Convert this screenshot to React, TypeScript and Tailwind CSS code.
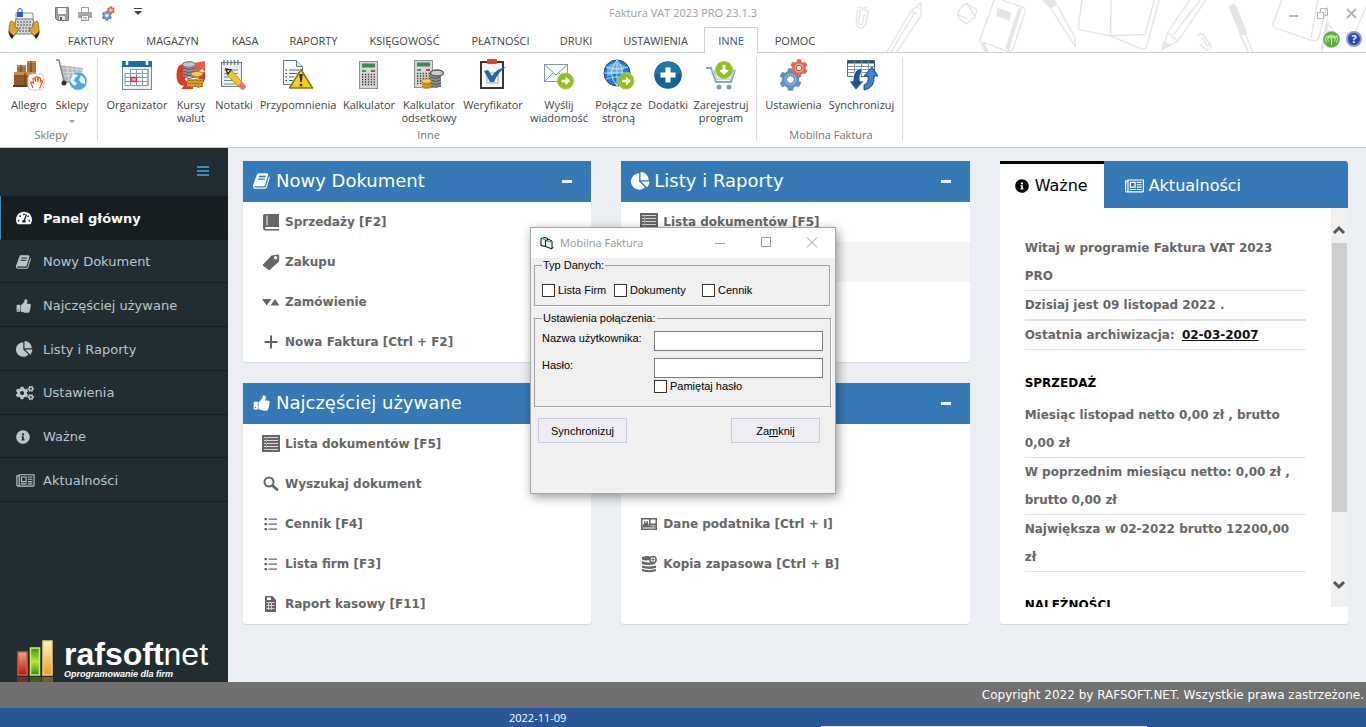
import type { ReactNode } from "react";
import { FaCog, FaCogs, FaInfoCircle, FaTachometerAlt } from "react-icons/fa";

/* ---------- small glyphs ---------- */

function BookIcon({ className }: { className?: string }) {
  return (
    <svg className={className} viewBox="0 0 1792 1792" fill="currentColor" aria-hidden="true">
      <path d="M1639 478q40 57 18 129l-275 906q-19 64-76.5 107.5t-122.5 43.5h-923q-77 0-148.5-53.5t-99.5-131.5q-24-67-2-127 0-4 3-27t4-37q1-8-3-21.5t-3-19.5q2-11 8-21t16.5-23.5 16.5-23.5q23-38 45-91.5t30-91.5q3-10 .5-30t-.5-28q3-11 17-28t17-23q21-36 42-92t25-90q1-9-2.5-32t.5-28q4-13 22-30.5t22-22.5q19-26 42.5-84.5t27.5-96.5q1-8-3-25.5t-2-26.5q2-8 9-18t18-23 17-21q8-12 16.5-30.5t15-35 16-36 19.5-32 26.5-23.5 36-11.5 47.5 5.5l-1 3q38-9 51-9h761q74 0 114 56t18 130l-274 906q-36 119-71.5 153.5t-128.5 34.5h-869q-27 0-38 15-11 16-1 43 24 70 144 70h923q29 0 56-15.5t35-41.5l300-987q7-22 5-57 38 15 59 43zm-1064 2q-4 13 2 22.5t20 9.5h608q13 0 25.5-9.5t16.5-22.5l21-64q4-13-2-22.5t-20-9.5h-608q-13 0-25.5 9.5t-16.5 22.5zm-83 256q-4 13 2 22.5t20 9.5h608q13 0 25.5-9.5t16.5-22.5l21-64q4-13-2-22.5t-20-9.5h-608q-13 0-25.5 9.5t-16.5 22.5z" />
    </svg>
  );
}

function ThumbIcon({ className }: { className?: string }) {
  return (
    <svg className={className} viewBox="0 0 1792 1792" fill="currentColor" aria-hidden="true">
      <path d="M320 1344q0-26-19-45t-45-19q-27 0-45.5 19t-18.500 45q0 27 18.500 45.500t45.500 18.500q26 0 45-18.500t19-45.500zm160-512v640q0 26-19 45t-45 19h-288q-26 0-45-19t-19-45v-640q0-26 19-45t45-19h288q26 0 45 19t19 45zm1184 0q0 86-55 149 15 44 15 76 3 76-43 137 17 56 0 117-15 57-54 94 9 112-49 181-64 76-197 78h-129q-66 0-144-15.500t-121.500-29-120.500-39.500q-123-43-158-44-26-1-45-19.500t-19-44.500v-641q0-25 18-43.500t43-20.500q24-2 76-59t101-121q68-87 101-120 18-18 31-48t17.500-48.500 13.500-60.500q7-39 12.500-61t19.500-52 34-50q19-19 45-19 46 0 82.500 10.500t60 26 40 40.500 24 45 12 50 5 45 .5 39q0 38-9.500 76t-19 60-27.500 56q-3 6-10 18t-11 22-8 24h277q78 0 135 57t57 135z" />
    </svg>
  );
}

function PieIcon({ className }: { className?: string }) {
  return (
    <svg className={className} viewBox="0 0 1792 1792" fill="currentColor" aria-hidden="true">
      <path d="M768 890l546 546q-106 108-247.5 168t-298.5 60q-209 0-385.5-103t-279.5-279.5-103-385.5 103-385.5 279.5-279.5 385.5-103v762zm187 6h773q0 157-60 298.5t-168 247.5zm709-128h-768v-768q209 0 385.5 103t279.5 279.5 103 385.5z" />
    </svg>
  );
}

function NewsIcon({ className }: { className?: string }) {
  return (
    <svg className={className} viewBox="0 0 2048 1792" fill="currentColor" aria-hidden="true">
      <path d="M1024 512h-384v384h384v-384zm128 640v128h-640v-128h640zm0-768v640h-640v-640h640zm640 768v128h-512v-128h512zm0-256v128h-512v-128h512zm0-256v128h-512v-128h512zm0-256v128h-512v-128h512zm-1536 960v-960h-128v960q0 26 19 45t45 19 45-19 19-45zm1664 0v-1088h-1536v1088q0 33-11 64h1483q26 0 45-19t19-45zm128-1216v1216q0 80-56 136t-136 56h-1664q-80 0-136-56t-56-136v-1088h256v-128h1792z" />
    </svg>
  );
}

function Glyph({ children }: { children: ReactNode }) {
  return (
    <svg className="h-[18px] w-[18px] shrink-0" viewBox="0 0 18 18" fill="currentColor" aria-hidden="true">
      {children}
    </svg>
  );
}

const glyphs = {
  ledger: (
    <Glyph>
      <path d="M3 1h14v13H4.500q-1.500 0-1.500 1t1.500 1H17v1.500H3.500Q1 17.500 1 15V3q0-2 2-2z" />
      <path d="M5 2.500v10" stroke="#fff" />
    </Glyph>
  ),
  tag: (
    <Glyph>
      <path fillRule="evenodd" d="M1 11.500 9.500 2.500 16 1.500q1.200 0 1.200 1.200L17 8.500 8 16.800q-.8.600-1.500 0L1 12.800q-.6-.600 0-1.300zM13.500 3a1.700 1.700 0 1 0 .1 3.400 1.700 1.700 0 0 0-.1-3.400z" />
    </Glyph>
  ),
  order: (
    <Glyph>
      <path d="M0 6h9.500L4.700 12.500zM8.500 12.500h9L13 6z" />
    </Glyph>
  ),
  plus: (
    <Glyph>
      <path d="M8 2.500h2V8h5.500v2H10v5.500H8V10H2.500V8H8z" />
    </Glyph>
  ),
  table: (
    <Glyph>
      <path d="M0 0h18v17H0z" />
      <path d="M2 2.500h14M2 5.500h14M2 8.500h14M2 11.500h14M2 14.500h14" stroke="#d8d8d8" />
      <path d="M4.500 2v13" stroke="#999" />
    </Glyph>
  ),
  search: (
    <Glyph>
      <circle cx="7" cy="7" r="4.500" fill="none" stroke="currentColor" strokeWidth="2" />
      <path d="m10.500 10.500 4.500 4" stroke="currentColor" strokeWidth="3" strokeLinecap="round" />
    </Glyph>
  ),
  list: (
    <Glyph>
      <path d="M2.500 3h2.500v2.300H2.500zM2.500 8h2.500v2.300H2.500zM2.500 13h2.500v2.300H2.500zM6.500 3.500H15v1.300H6.500zM6.500 8.500H15v1.300H6.500zM6.500 13.500H15v1.300H6.500z" />
    </Glyph>
  ),
  report: (
    <Glyph>
      <path fillRule="evenodd" d="M3 1h7.500l3.500 4v12H3zM5 2.500v2.500h4V2.500z" />
      <path d="M4.500 7.500h8M4.500 10.500h8M4.500 13.500h8M6.500 7v8M9.500 7v8" stroke="#d0d0d0" />
    </Glyph>
  ),
  card: (
    <Glyph>
      <path fillRule="evenodd" d="M1 3h16v12H1zm1.500 1.500V11H9V4.500zm8 0v4h5v-4zm0 6v.8h5v-.8zm-8 2v1h13v-1z" />
      <path d="M4.300 6h1.200v1.800h1.200V6H8v1.800l.8 2.400V11H3v-1l1.300-2z" />
    </Glyph>
  ),
  backup: (
    <Glyph>
      <path d="M2 2q7-2 8 0v3Q5 6 2 4.500zM2 6q4 2 9 1.200 2 1.600 4.500.8V9Q8 11 2 9zM2 10.500q6.500 2 14 0v2.200Q9 15 2 12.800zM2 14q6.500 2.300 14 0v2Q9 18.500 2 16z" />
      <circle cx="13" cy="4.500" r="3.100" fill="#fff" stroke="currentColor" strokeWidth="1.500" />
      <path d="M13 3v3M11.500 4.500h3" stroke="currentColor" />
    </Glyph>
  ),
};

/* ---------- ribbon artwork ---------- */

function Art({ children }: { children: ReactNode }) {
  return (
    <svg className="h-8 w-8 shrink-0" viewBox="0 0 32 32" fill="none" aria-hidden="true">
      {children}
    </svg>
  );
}

function GoBadge({ cx, cy }: { cx: number; cy: number }) {
  return (
    <g>
      <circle cx={cx} cy={cy} r="8" fill="#8fbf21" stroke="#a9ce4b" />
      <path d={`M${cx - 4} ${cy - 1.2}h4v-3l5 4.200-5 4.200v-3h-4z`} fill="#fff" />
    </g>
  );
}

function GearPair() {
  return (
    <>
      <FaCog x="1" y="9" size={23} color="#5f8fc6" />
      <circle cx="12.500" cy="20.500" r="6" fill="#8db4de" />
      <circle cx="12.500" cy="20.500" r="4" fill="#fff" stroke="#3f6dab" />
      <FaCog x="12" y="0" size={18} color="#e0664f" />
      <circle cx="21" cy="9" r="4.500" fill="#f3a28f" />
      <circle cx="21" cy="9" r="2.700" fill="#fff" stroke="#c5452f" />
    </>
  );
}

function CalculatorBody() {
  return (
    <>
      <rect x="6.500" y="2.500" width="18" height="27" fill="#d6d8d8" stroke="#8b9092" />
      <rect x="9" y="4.500" width="13" height="4" fill="#3f8557" />
      <rect x="9" y="11" width="4" height="2" fill="#38a052" />
      <rect x="18" y="11" width="4" height="2" fill="#c5403c" />
      <path d="M9 15.500h13M9 18h13M9 20.500h13M9 23h13M9 25.500h13" stroke="#34383b" strokeWidth="1.300" strokeDasharray="1.300 1.600" />
    </>
  );
}

const art = {
  allegro: (
    <Art>
      <path d="M4 6h9v8H4zM14 2h9v12h-9z" fill="#a9713c" />
      <path d="M1 13h22v13H1z" fill="#925a2b" />
      <path d="M1 13h22v3H1zM4 6h9v2H4zM14 2h9v2h-9z" fill="#c48e55" />
      <path d="M12 14v12M8 6v7M18 2v11" stroke="#6d3f1a" />
      <rect x="0" y="26" width="18" height="2" fill="#5e3d24" />
      <rect x="15" y="15" width="16" height="16" rx="4" fill="#fff" stroke="#cfcfcf" />
      <path d="M20 29q-1-3-2.500-5.500 1.500-1 3 1l-.5-5q1.500-1 2 0l.7 3V18q1.500-.8 2 0l.2 4.500.8-4q1.500-.3 1.700.8l-.2 4 1-2q1.500 0 1.200 1.200L28 26l-1.500 3.500" stroke="#ee5a1c" strokeWidth="1.200" strokeLinejoin="round" />
    </Art>
  ),
  shops: (
    <Art>
      <path d="M4 6 27 9l-3 12-16 1z" fill="#b4b9bc" />
      <path d="m6 9 20 2M7 13l18 1M8 17l17 0M11 7l2 15M16 8l1 14M21 8v14" stroke="#e2e4e6" strokeWidth=".8" />
      <path d="M0 1h3l5 22h6" stroke="#83898d" strokeWidth="1.500" />
      <circle cx="8" cy="24" r="2.500" fill="#2c2f31" />
      <circle cx="22" cy="22" r="9" fill="#4ca4dc" stroke="#a9d5f1" />
      <path d="M17 15q4 0 5 2l-3 2-1 3 3 2-2 3q-4-2-5-6zM25 16l4 4v5l-4-1-2-3z" fill="#e8f5fc" />
    </Art>
  ),
  organizer: (
    <Art>
      <rect x="1.500" y="2.500" width="29" height="28" fill="#eef2f4" stroke="#6d8a9b" />
      <rect x="1" y="2" width="30" height="6" fill="#1a6fa3" />
      <path d="M6 2v4M26 2v4" stroke="#fff" strokeWidth="2.500" />
      <path d="M4 11h24v15H4z" fill="#fff" />
      <path d="M9 10.500h18v16H4v-12h23M4 18.500h23M4 22.500h23M9.500 11v15M15.500 11v15M21.500 11v15M27 10v17" stroke="#7f9aab" />
      <rect x="10" y="18.500" width="5.500" height="4" fill="#f3a5b0" stroke="#c5304b" strokeWidth="1.300" />
    </Art>
  ),
  rates: (
    <Art>
      <path d="M13 3Q2 4 1.500 15T9 27l-3 3h12v-9l-3 3q-6-2-6-9 0-6 6-7z" fill="#dd3b25" />
      <path d="M19 4l11-2v11l-3-3q-2 3-7 3z" fill="#ee5b42" />
      <path d="M30 13q2 10-7 16l-3-4q5-4 4-11z" fill="#d73622" />
      <path d="M8 6h12v12H8z" fill="#8f9395" />
      <ellipse cx="14" cy="5.500" rx="6.500" ry="2.800" fill="#c3c6c8" stroke="#6d7173" />
      <path d="M8 9q6 3 12 0M8 12q6 3 12 0M8 15q6 3 12 0M8 18q6 3 12 0" stroke="#56595b" />
      <path d="M12 20h16v8H12z" fill="#dfa021" />
      <ellipse cx="22" cy="15" rx="6" ry="2.500" fill="#f8cf4d" stroke="#b67c12" />
      <path d="M17 18q5 2 10 0M12 21q5 2 8 0 5 2 8 0M12 24q5 2 8 0 5 2 8 0M12 27q5 2 8 0 5 2 8 0" stroke="#a97008" />
    </Art>
  ),
  notes: (
    <Art>
      <rect x="3.500" y="3.500" width="20" height="24" fill="#edf1f3" stroke="#617d8c" />
      <path d="M6 1v5M9.500 1v5M13 1v5M16.500 1v5M20 1v5" stroke="#71777a" strokeWidth="1.300" />
      <path d="M6 11h14M6 14.500h14M6 18h14M6 21.500h10M6 25h14" stroke="#5e8da9" />
      <path d="m8 10 6 2 10 11-4 4L9 16z" fill="#f4c61d" stroke="#ba870b" strokeWidth=".8" />
      <path d="m8 10 5 1-3 4z" fill="#fff" stroke="#222" strokeWidth="1.300" />
      <path d="m20 27 4-4 4 4q-.5 3-4 4z" fill="#ea6f7b" />
    </Art>
  ),
  reminders: (
    <Art>
      <path d="M1.500 1.500h13l6 6v18h-19z" fill="#fff" stroke="#607c8a" />
      <path d="M14.500 1.500v6h6" stroke="#607c8a" fill="#dfe7eb" />
      <path d="M7 11h10M7 14.500h8M7 18h5M7 21.500h4" stroke="#356f92" />
      <path d="M3.500 11h1.500M3.500 14.500h1.500M3.500 18h1.500M3.500 21.500h1.500" stroke="#222" />
      <path d="M19 10.500 30.500 29h-23z" fill="#f9cf12" stroke="#8c7614" strokeWidth="1.500" strokeLinejoin="round" />
      <path d="M17.200 15h3.600l-1 8h-1.600z" fill="#2e2a12" />
      <circle cx="19" cy="26" r="1.500" fill="#2e2a12" />
    </Art>
  ),
  calculator: (
    <Art>
      <CalculatorBody />
    </Art>
  ),
  interest: (
    <Art>
      <g transform="translate(-5 -1)">
        <CalculatorBody />
      </g>
      <path d="M17 15h11v13H17z" fill="#8b8f91" />
      <ellipse cx="24" cy="14" rx="6.500" ry="3" fill="#c8cbcd" stroke="#585c5e" strokeWidth="1.500" />
      <path d="M17 18q6 3 11 0M17 21q6 3 11 0M17 24q6 3 11 0M17 27q6 3 11 0" stroke="#4f5355" />
      <path d="M9 22h9v7q-5 2-9 0z" fill="#e0a124" />
      <ellipse cx="13.500" cy="22" rx="4.800" ry="2.200" fill="#fbd35a" stroke="#b77f12" />
      <path d="M9 25q5 2 9 0M9 27.500q5 2 9 0" stroke="#b0770d" />
    </Art>
  ),
  verifier: (
    <Art>
      <rect x="4" y="3" width="22" height="26" fill="#f4f6f7" stroke="#40362f" strokeWidth="2" />
      <rect x="10" y="0" width="10" height="5" rx="1" fill="#dc4631" />
      <rect x="10" y="14" width="11" height="10" stroke="#96a6ae" />
      <path d="M7 12l4-1 4 6q4-7 14-9-8 5-12 15h-4z" fill="#1a6b9e" />
    </Art>
  ),
  message: (
    <Art>
      <rect x="1.500" y="5.500" width="23" height="17" fill="#fafbfb" stroke="#8897a0" />
      <path d="m2 6 11 10L24 6M2 22l8-8M24 22l-8-8" stroke="#8897a0" />
      <GoBadge cx={22.5} cy={22} />
    </Art>
  ),
  web: (
    <Art>
      <circle cx="14" cy="14" r="13" fill="#1f7bc9" stroke="#174d86" />
      <path d="M4 8q8-8 18-1l-3 7-9 1-6 3z" fill="#9ed2f7" opacity=".6" />
      <path d="M1 14h26M3 8q11 4 22 0M3 20q11-4 22 0M14 1v26M14 1Q3 14 14 27M14 1q11 13 0 26" stroke="#cfe9fb" strokeWidth=".9" />
      <GoBadge cx={23} cy={22} />
    </Art>
  ),
  addons: (
    <Art>
      <circle cx="16" cy="16" r="13.800" fill="#11649a" />
      <path d="M3 14q2-10 13-11 11 1 13 11-13 5-26 0z" fill="#2f83b5" opacity=".6" />
      <path d="M13.500 8.500h5v5h5v5h-5v5h-5v-5h-5v-5h5z" fill="#fff" />
    </Art>
  ),
  register: (
    <Art>
      <path d="M1 9h5l5 14h15l4-12" stroke="#86a9bd" strokeWidth="2" />
      <path d="M6 12h3l3 8h14l3-9h1" stroke="#b9cdd8" strokeWidth="1.300" />
      <circle cx="14" cy="28" r="2.500" fill="#7fa3b8" />
      <circle cx="24" cy="28" r="2.500" fill="#7fa3b8" />
      <circle cx="19" cy="11" r="8.500" fill="#8fbf21" stroke="#a9ce4b" />
      <path d="M17.500 6h3v5h3.500l-5 5-5-5h3.500z" fill="#fff" />
    </Art>
  ),
  settings: (
    <Art>
      <GearPair />
    </Art>
  ),
  sync: (
    <Art>
      <path d="M1.500 1.500h27v16h-27z" fill="#fff" stroke="#55707e" />
      <path d="M1.500 3h27" stroke="#2e5566" strokeWidth="3" />
      <path d="M2 7.500h26M2 10.500h26M2 13.500h26M8.500 2v15M15.500 2v15M22.500 2v15" stroke="#7e949f" />
      <path d="M16 9q-9 1-9 13H3l7 9 8-9h-4q-1-6 2-9z" fill="#1f5296" stroke="#fff" strokeWidth=".8" />
      <path d="M18 31q11-2 10-14h4l-6-9-8 9h4q1 7-4 9z" fill="#3f83cc" stroke="#12396f" strokeWidth=".8" />
    </Art>
  ),
};

type RibbonItem = { label: string[]; icon: ReactNode; width: string; menu?: boolean };

const ribbonGroups: { name: string; className: string; items: RibbonItem[] }[] = [
  {
    name: "Sklepy",
    className: "pl-[7px] pr-1",
    items: [
      { label: ["Allegro"], icon: art.allegro, width: "w-[44px]" },
      { label: ["Sklepy"], icon: art.shops, width: "w-[42px]", menu: true },
    ],
  },
  {
    name: "Inne",
    className: "pl-[6px] pr-[5px]",
    items: [
      { label: ["Organizator"], icon: art.organizer, width: "w-[66px]" },
      { label: ["Kursy", "walut"], icon: art.rates, width: "w-[42px]" },
      { label: ["Notatki"], icon: art.notes, width: "w-[44px]" },
      { label: ["Przypomnienia"], icon: art.reminders, width: "w-[84px]" },
      { label: ["Kalkulator"], icon: art.calculator, width: "w-[58px]" },
      { label: ["Kalkulator", "odsetkowy"], icon: art.interest, width: "w-[62px]" },
      { label: ["Weryfikator"], icon: art.verifier, width: "w-[66px]" },
      { label: ["Wyślij", "wiadomość"], icon: art.message, width: "w-[66px]" },
      { label: ["Połącz ze", "stroną"], icon: art.web, width: "w-[53px]" },
      { label: ["Dodatki"], icon: art.addons, width: "w-[46px]" },
      { label: ["Zarejestruj", "program"], icon: art.register, width: "w-[60px]" },
    ],
  },
  {
    name: "Mobilna Faktura",
    className: "pl-[5px] pr-1",
    items: [
      { label: ["Ustawienia"], icon: art.settings, width: "w-[63px]" },
      { label: ["Synchronizuj"], icon: art.sync, width: "w-[73px]" },
    ],
  },
];

const tabs = [
  { label: "FAKTURY", width: "w-[76px]" },
  { label: "MAGAZYN", width: "w-[87px]" },
  { label: "KASA", width: "w-[58px]" },
  { label: "RAPORTY", width: "w-[79px]" },
  { label: "KSIĘGOWOŚĆ", width: "w-[103px]" },
  { label: "PŁATNOŚCI", width: "w-[89px]" },
  { label: "DRUKI", width: "w-[62px]" },
  { label: "USTAWIENIA", width: "w-[97px]" },
  { label: "INNE", width: "w-[54px]", active: true },
  { label: "POMOC", width: "w-[74px]" },
];

/* ---------- header ---------- */

function Doodles() {
  return (
    <svg className="absolute right-0 top-0 h-[52px] w-[546px]" viewBox="0 0 1568 157" preserveAspectRatio="none" fill="none" stroke="#e6e6e6" strokeWidth="4" aria-hidden="true">
      <path d="M108 20q12 8 28 0M108 30l-4 40q2 18 18 14l8-8 8-40q-8-14-22-4l-6 36q4 10 12 2l6-28" />
      <path d="m192 157 70-124 28-24v38l-70 110M262 33l18 10M204 157l68-120M276 22l14-14v18z" />
      <path d="m420 10 30 18q2 24-30 44l-24-20q-4-20 24-42zM420 10q14 14 26 46M398 46l26 10" />
      <path d="m500 0-42 124 84 32q10-2 14-14l34-110q0-6-8-10l-60-22M578 24l-38 130M470 130l14 27" />
      <path d="m574 26-38 122M464 130l14 26" strokeWidth="9" />
      <path d="m510 26 38 14-6 20-34-14z" fill="#e6e6e6" />
      <path d="m644 0 18 24 72 118-2-28-52-100M662 24l16-10" />
      <path d="m640 0 20 22 18-10-6-12z" fill="#e6e6e6" />
      <path d="m752 0-10 82q0 8 12 10l80 16 90 40q10 2 14-8L974 0M836 0l-2 108 100-4L960 0" />
      <path d="M1062 0 998 98l-14 50 44-24 80-124M998 98l30 26M1014 106l78-106" />
      <path d="m986 126-2 22 22-12z" fill="#e6e6e6" />
      <path d="M1084 110q4-14 16-4l22 30q4 16-10 16l-22-18M1096 112l16 26 8-4-14-22" />
      <path d="m1186 24 28 72" strokeWidth="22" strokeLinecap="round" />
      <path d="m1204 100 26 57M1220 94l22 63" />
      <path d="m1326 0-26 74 6 10 106 38q14 4 20-6l24-100M1430 0l-20 114M1452 60l28 40" />
      <path d="m1568 20-40 100M1460 90l-20 67" />
      <path d="m1456 70-14 80" strokeWidth="9" />
    </svg>
  );
}

function AppHeader() {
  return (
    <header className="relative flex bg-white font-['Open_Sans','Noto_Sans',sans-serif] text-[#444]">
      <Doodles />
      <div className="absolute inset-x-0 bottom-0 border-b border-[#d2d2d2]" />
      <div className="flex w-[53px] shrink-0 justify-center pr-[5px] pt-[7px]">
        <svg className="h-8 w-8" viewBox="0 0 32 32" fill="none" aria-hidden="true">
          <path d="M8 6h17v20H8z" fill="#f3f4f6" stroke="#8d9197" />
          <path d="M8 12h17l3 15H5z" fill="#d4d6da" stroke="#74787e" />
          <path d="M9 15h15M9 18h16M8 21h17M8 24h18" stroke="#474b52" strokeDasharray="2 1" />
          <rect x="9" y="5" width="6" height="5" fill="#2b56d6" />
          <path d="M10 5V2.500q2-2.500 4 0V5" stroke="#2b56d6" />
          <path d="M1 25q0-9 2-11l4 2v4l4 2-5 7zM31 25q0-9-2-11l-4 2v4l-4 2 5 7z" fill="#e3a62c" stroke="#8f6313" strokeWidth=".8" />
          <path d="m0 24 6 5-2 3q-3-3-4-8zM32 24l-6 5 2 3q3-3 4-8z" fill="#23262b" />
        </svg>
      </div>
      <div className="relative flex min-w-0 flex-1 flex-col">
        <div className="flex h-[27px] items-center">
          <div className="flex flex-1 items-center gap-[9px] pl-[2px]">
            <button type="button" aria-label="Zapisz">
              <svg className="h-[14px] w-[14px]" viewBox="0 0 14 14" fill="none" aria-hidden="true">
                <path d="M.5.500h13v13h-11l-2-2z" fill="#9a9da0" stroke="#777a7d" />
                <path d="M3 1h8v6H3z" fill="#fff" />
                <path d="M4 9h6v4H4z" fill="#dfe2e4" />
                <path d="M5 10h2v3H5z" fill="#555" />
              </svg>
            </button>
            <button type="button" aria-label="Drukuj">
              <svg className="h-[14px] w-[14px]" viewBox="0 0 14 14" fill="none" aria-hidden="true">
                <path d="M3.500.5h7v5h-7z" fill="#fff" stroke="#999" />
                <path d="M0 5h14v6H0z" fill="#a6aaad" />
                <path d="M3.500 8.500h7v5h-7z" fill="#fff" stroke="#999" />
                <path d="M5 10.500h4M5 12h4" stroke="#bbb" />
              </svg>
            </button>
            <button type="button" aria-label="Opcje">
              <svg className="h-[15px] w-[15px]" viewBox="0 0 32 32" fill="none" aria-hidden="true">
                <GearPair />
              </svg>
            </button>
            <button type="button" aria-label="Dostosuj" className="mb-[6px] ml-[8px]">
              <svg className="h-[10px] w-[10px]" viewBox="0 0 10 10" aria-hidden="true">
                <path d="M1 2h8v1H1zM1 5h8L5 9z" fill="#444" />
              </svg>
            </button>
          </div>
          <p className="pr-[46px] text-[11px] text-[#a0a0a0]">Faktura VAT 2023 PRO 23.1.3</p>
          <div className="flex flex-1 items-center justify-end gap-[18px] pr-[9px] text-[#b8b8b8]">
            <button type="button" aria-label="Minimalizuj">
              <svg className="h-[11px] w-[11px]" viewBox="0 0 11 11" aria-hidden="true">
                <path d="M1 7h9v2H1z" fill="currentColor" />
              </svg>
            </button>
            <button type="button" aria-label="Przywróć">
              <svg className="h-[11px] w-[11px]" viewBox="0 0 11 11" fill="none" stroke="currentColor" aria-hidden="true">
                <path d="M.5 4.500h6v6h-6zM3.500 4V.5h7v7H7" />
              </svg>
            </button>
            <button type="button" aria-label="Zamknij program">
              <svg className="h-[11px] w-[11px]" viewBox="0 0 11 11" fill="none" stroke="currentColor" strokeWidth="2" aria-hidden="true">
                <path d="m1 1 9 9M10 1l-9 9" />
              </svg>
            </button>
          </div>
        </div>
        <nav className="flex h-[26px]">
          {tabs.map((tab) => (
            <button
              key={tab.label}
              type="button"
              className={`${tab.width} shrink-0 whitespace-nowrap pt-[2px] text-center text-[11px] ${
                tab.active ? "border border-b-0 border-[#d2d2d2] bg-white text-[#2b579a]" : ""
              }`}
            >
              {tab.label}
            </button>
          ))}
          <div className="flex flex-1 items-center justify-end gap-[6px] pb-[2px] pr-[4px]">
            <button type="button" aria-label="Pomoc zdalna">
              <svg className="h-[17px] w-[17px]" viewBox="0 0 17 17" fill="none" aria-hidden="true">
                <circle cx="8.500" cy="8.500" r="7.800" fill="#4fb52e" stroke="#7d9b72" />
                <path d="M3 6q5-5 11 0-5 3-11 0z" fill="#a9e38c" />
                <path d="M8.500 7v7M5.500 5.500q-1.500 2.500 0 5M11.500 5.500q1.500 2.500 0 5M3.500 4.500q-2 4 0 7M13.500 4.500q2 4 0 7" stroke="#eefbe8" strokeWidth=".8" />
              </svg>
            </button>
            <button type="button" aria-label="Pomoc" className="h-4 w-4 rounded-full border-2 border-[#8e9cc4] bg-[#2148c0] text-[11px] font-bold leading-[12px] text-white">
              ?
            </button>
          </div>
        </nav>
      </div>
    </header>
  );
}

function Ribbon() {
  return (
    <div className="flex border-b border-[#d2d2d2] bg-white font-['Open_Sans','Noto_Sans',sans-serif] text-[11px] text-[#444]">
      {ribbonGroups.map((group) => (
        <section key={group.name} className="pb-[6px] pt-[5px]">
          <div className={`flex h-[83px] flex-col justify-between border-r border-[#dcdcdc] ${group.className}`}>
            <div className="flex">
              {group.items.map((item) => (
                <button key={item.label.join(" ")} type="button" className={`flex shrink-0 flex-col items-center pt-px ${item.width}`}>
                  {item.icon}
                  <span className="mt-[7px] whitespace-nowrap leading-[13px]">
                    {item.label.map((line) => (
                      <span key={line} className="block">
                        {line}
                      </span>
                    ))}
                  </span>
                  {item.menu && <span className="mt-[9px] border-x-[3px] border-t-[3px] border-x-transparent border-t-[#999]" />}
                </button>
              ))}
            </div>
            <p className="pl-[2px] text-center leading-[12px] text-[#777]">{group.name}</p>
          </div>
        </section>
      ))}
    </div>
  );
}

/* ---------- sidebar ---------- */

const sidebarItems = [
  { label: "Panel główny", icon: <FaTachometerAlt className="h-4 w-4" />, active: true },
  { label: "Nowy Dokument", icon: <BookIcon className="h-4 w-4" /> },
  { label: "Najczęściej używane", icon: <ThumbIcon className="h-4 w-4" /> },
  { label: "Listy i Raporty", icon: <PieIcon className="h-[17px] w-[17px]" /> },
  { label: "Ustawienia", icon: <FaCogs className="h-[18px] w-[18px]" /> },
  { label: "Ważne", icon: <FaInfoCircle className="h-[14px] w-[14px]" /> },
  { label: "Aktualności", icon: <NewsIcon className="h-4 w-[19px]" /> },
];

function Logo() {
  return (
    <div className="flex h-[43px] items-start gap-[11px] pl-[17px] text-white">
      <svg className="h-[43px] w-9 shrink-0" viewBox="0 0 36 43" aria-hidden="true">
        <defs>
          <linearGradient id="barRed" x2="0" y2="1">
            <stop stopColor="#e9a796" />
            <stop offset="1" stopColor="#b8121b" />
          </linearGradient>
          <linearGradient id="barGreen" x2="0" y2="1">
            <stop stopColor="#349a0a" />
            <stop offset=".5" stopColor="#b9e838" />
            <stop offset="1" stopColor="#2f8d10" />
          </linearGradient>
          <linearGradient id="barAmber" x2="0" y2="1">
            <stop stopColor="#fff4c8" />
            <stop offset="1" stopColor="#f39a1b" />
          </linearGradient>
        </defs>
        <rect x="1" y="13" width="9" height="23" fill="url(#barRed)" stroke="#e4572b" strokeWidth="1.500" />
        <rect x="13.500" y="9" width="9" height="27" fill="url(#barGreen)" stroke="#c2f06a" strokeWidth="1.500" />
        <rect x="26" y="2" width="9" height="34" fill="url(#barAmber)" stroke="#f7cf76" strokeWidth="1.500" />
        <path d="M0 38h11v5H0z" fill="#6d3427" />
        <path d="M13 38h11v5H13z" fill="#3f5d26" />
        <path d="M25 38h11v5H25z" fill="#7b5a2c" />
      </svg>
      <div className="font-['Liberation_Sans',Arial,sans-serif]">
        <p className="text-[32px] leading-[30px]">
          <b>rafsoft</b>net
        </p>
        <p className="text-[9px] font-bold italic leading-[10px]">Oprogramowanie dla firm</p>
      </div>
    </div>
  );
}

function Sidebar() {
  return (
    <aside className="flex w-[228px] shrink-0 flex-col justify-between bg-[#222d32] text-[13px] text-[#b8c7ce]">
      <div>
        <div className="flex h-12 items-center justify-end pr-[19px]">
          <button type="button" aria-label="Menu" className="text-[#3c8dbc]">
            <svg className="h-[14px] w-3" viewBox="0 0 12 14" fill="currentColor" aria-hidden="true">
              <path d="M0 1h12v2H0zM0 5h12v2H0zM0 9h12v2H0z" />
            </svg>
          </button>
        </div>
        <nav className="grid h-[306px] grid-rows-7">
          {sidebarItems.map((item) => (
            <a
              key={item.label}
              href="#"
              className={`flex items-center border-b border-[#161d20] pl-[15px] pt-[2px] ${
                item.active ? "border-l border-l-[#3c8dbc] bg-[#171e21] font-bold text-white" : "border-l border-l-transparent"
              }`}
            >
              <span className="w-[27px]">{item.icon}</span>
              {item.label}
            </a>
          ))}
        </nav>
      </div>
      <Logo />
    </aside>
  );
}

/* ---------- dashboard ---------- */

type PanelRow = { label: string; icon: ReactNode } | null;

function Panel({ title, icon, rows, striped }: { title?: string; icon?: ReactNode; rows: PanelRow[]; striped?: number }) {
  return (
    <section className="rounded-b-[3px] bg-white shadow-[0_1px_1px_rgba(0,0,0,0.1)]">
      <div className="flex h-[41px] items-center bg-[#357ab7] pb-px pl-[10px] pr-[19px] text-white">
        <span className="w-[23px]">{icon}</span>
        <h2 className="flex-1 text-[18px] leading-[24px]">{title}</h2>
        <button type="button" aria-label="Zwiń" className="flex h-4 w-[10px] items-center">
          <span className="h-[3px] w-full bg-white/90" />
        </button>
      </div>
      <ul>
        {rows.map((row, i) => (
          <li key={i} className={`h-10 ${striped === i ? "bg-[#f4f4f4]" : ""}`}>
            {row && (
              <a href="#" className="flex h-full items-center gap-[5px] pl-[19px] text-[12px] font-bold text-[#666]">
                {row.icon}
                {row.label}
              </a>
            )}
          </li>
        ))}
      </ul>
    </section>
  );
}

function NewsLine({ children }: { children: ReactNode }) {
  return <p className="border-b border-[#e4e4e4] pr-2 leading-[28px]">{children}</p>;
}

function NewsPanel() {
  return (
    <section className="flex flex-col rounded-[3px] bg-white pb-[17px] shadow-[0_1px_1px_rgba(0,0,0,0.1)]">
      <div className="flex h-[47px] rounded-tr-[3px] bg-[#357ab7] text-[16px]">
        <button type="button" className="flex w-[104px] items-center gap-[6px] border-t-[3px] border-black bg-white pl-[15px] text-black">
          <FaInfoCircle className="h-[14px] w-[14px]" />
          Ważne
        </button>
        <button type="button" className="flex items-center gap-[5px] pl-[21px] pt-[3px] text-white">
          <NewsIcon className="h-[17px] w-[19px]" />
          Aktualności
        </button>
      </div>
      <div className="flex h-[399px] overflow-hidden">
        <div className="min-w-0 flex-1 px-[25px] pt-[26px] text-[12px] font-bold text-[#666]">
          <NewsLine>Witaj w programie Faktura VAT 2023 PRO</NewsLine>
          <NewsLine>Dzisiaj jest 09 listopad 2022 .</NewsLine>
          <div className="border-t border-[#e4e4e4]">
            <NewsLine>
              Ostatnia archiwizacja:{" "}
              <a href="#" className="ml-[3px] text-[#111] underline">
                02-03-2007
              </a>
            </NewsLine>
          </div>
          <h3 className="mb-[9px] mt-6 leading-[18px] text-black">SPRZEDAŻ</h3>
          <NewsLine>Miesiąc listopad netto 0,00 zł , brutto 0,00 zł</NewsLine>
          <NewsLine>W poprzednim miesiącu netto: 0,00 zł , brutto 0,00 zł</NewsLine>
          <NewsLine>Największa w 02-2022 brutto 12200,00 zł</NewsLine>
          <h3 className="mt-6 leading-[18px] text-black">NALEŻNOŚCI</h3>
        </div>
        <div className="flex w-[17px] shrink-0 flex-col items-center bg-[#f0f0f0] pb-[17px] pr-px pt-[17px]">
          <svg className="h-[10px] w-[14px]" viewBox="0 0 14 10" fill="none" stroke="#555" strokeWidth="3" aria-hidden="true">
            <path d="m2 8 5-5 5 5" />
          </svg>
          <div className="mt-[8px] h-[269px] w-[15px] bg-[#cdcdcd]" />
          <div className="flex-1" />
          <svg className="h-[10px] w-[14px]" viewBox="0 0 14 10" fill="none" stroke="#555" strokeWidth="3" aria-hidden="true">
            <path d="m2 2 5 5 5-5" />
          </svg>
        </div>
      </div>
    </section>
  );
}

function Dashboard() {
  return (
    <main className="grid min-w-0 flex-1 grid-cols-3 items-start gap-[30px] pb-[57px] pl-[15px] pr-[18px] pt-[13px]">
      <div className="flex flex-col gap-[21px]">
        <Panel
          title="Nowy Dokument"
          icon={<BookIcon className="h-[18px] w-[18px]" />}
          rows={[
            { label: "Sprzedaży [F2]", icon: glyphs.ledger },
            { label: "Zakupu", icon: glyphs.tag },
            { label: "Zamówienie", icon: glyphs.order },
            { label: "Nowa Faktura [Ctrl + F2]", icon: glyphs.plus },
          ]}
        />
        <Panel
          title="Najczęściej używane"
          icon={<ThumbIcon className="h-[18px] w-[18px]" />}
          rows={[
            { label: "Lista dokumentów [F5]", icon: glyphs.table },
            { label: "Wyszukaj dokument", icon: glyphs.search },
            { label: "Cennik [F4]", icon: glyphs.list },
            { label: "Lista firm [F3]", icon: glyphs.list },
            { label: "Raport kasowy [F11]", icon: glyphs.report },
          ]}
        />
      </div>
      <div className="flex flex-col gap-[21px]">
        <Panel
          title="Listy i Raporty"
          icon={<PieIcon className="h-[19px] w-[19px]" />}
          striped={1}
          rows={[{ label: "Lista dokumentów [F5]", icon: glyphs.table }, null, null, null]}
        />
        <Panel
          rows={[
            null,
            null,
            { label: "Dane podatnika [Ctrl + I]", icon: glyphs.card },
            { label: "Kopia zapasowa [Ctrl + B]", icon: glyphs.backup },
            null,
          ]}
        />
      </div>
      <NewsPanel />
    </main>
  );
}

/* ---------- dialog ---------- */

function Check({ label, className }: { label: string; className?: string }) {
  return (
    <label className={`flex items-center gap-[3px] ${className ?? ""}`}>
      <input type="checkbox" className="h-[13px] w-[13px] appearance-none border border-[#333] bg-white" />
      {label}
    </label>
  );
}

const fieldsetClass = "ml-[3px] mr-[5px] border border-[#a0a0a0] px-[7px] shadow-[1px_1px_0_#fff]";

function SyncDialog() {
  return (
    <div
      role="dialog"
      aria-label="Mobilna Faktura"
      className="absolute left-1/2 top-[227px] h-[267px] w-[306px] -translate-x-1/2 border border-[#a5a5a5] bg-[#f0f0f0] font-['Liberation_Sans',Arial,sans-serif] text-[11px] leading-[14px] text-black shadow-[2px_3px_10px_rgba(0,0,0,0.4)]"
    >
      <div className="flex h-[30px] items-center bg-white pl-[9px] pr-[17px] font-['Open_Sans','Noto_Sans',sans-serif] text-[#999]">
        <svg className="h-[14px] w-[14px]" viewBox="0 0 14 14" fill="none" aria-hidden="true">
          <path d="M1 2.500 5 1.500l2.500 1v2h-2v6L1 9.500z" fill="#fff" stroke="#000" />
          <path d="M5.500 4.500 9 3.500l3 1.500v8l-6.500-2.500z" fill="#fff" stroke="#000" />
          <path d="m2 2.800 4 .7M6.500 5l5 1" stroke="#19c7d2" strokeWidth="1.500" />
          <path d="m12 10 2 1.500-2 1z" fill="#555" />
        </svg>
        <span className="flex-1 pl-[6px]">Mobilna Faktura</span>
        <div className="flex items-center gap-[34px]">
          <button type="button" aria-label="Minimalizuj okno">
            <svg className="h-3 w-3" viewBox="0 0 12 12" stroke="currentColor" aria-hidden="true">
              <path d="M1 6.500h10" />
            </svg>
          </button>
          <button type="button" aria-label="Maksymalizuj okno">
            <svg className="h-3 w-3" viewBox="0 0 12 12" fill="none" stroke="currentColor" aria-hidden="true">
              <path d="M1.500.5h9v9h-9z" />
            </svg>
          </button>
          <button type="button" aria-label="Zamknij okno">
            <svg className="h-3 w-3" viewBox="0 0 12 12" fill="none" stroke="currentColor" aria-hidden="true">
              <path d="m1 .5 10 10M11 .5l-10 10" />
            </svg>
          </button>
        </div>
      </div>
      <fieldset className={`${fieldsetClass} h-[48px]`}>
        <legend className="bg-[#f0f0f0] px-px">Typ Danych:</legend>
        <div className="flex pt-[11px]">
          <Check label="Lista Firm" className="w-[72px]" />
          <Check label="Dokumenty" className="w-[88px]" />
          <Check label="Cennik" />
        </div>
      </fieldset>
      <fieldset className={`${fieldsetClass} mt-[5px] h-[96px]`}>
        <legend className="bg-[#f0f0f0] px-px">Ustawienia połączenia:</legend>
        <div className="grid grid-cols-[112px_169px] gap-y-[7px] pt-[6px]">
          <label htmlFor="user">Nazwa użytkownika:</label>
          <input id="user" type="text" className="h-5 border border-[#7a7a7a] bg-white px-1" />
          <label htmlFor="password">Hasło:</label>
          <input id="password" type="password" className="h-5 border border-[#7a7a7a] bg-white px-1" />
        </div>
        <Check label="Pamiętaj hasło" className="ml-[112px] mt-px" />
      </fieldset>
      <div className="mt-[11px] flex justify-between pl-[7px] pr-[15px]">
        <button type="button" className="h-[25px] w-[89px] border border-[#cbcade] bg-[#eeedf3]">
          Synchronizuj
        </button>
        <button type="button" className="h-[25px] w-[89px] border border-[#cbcade] bg-[#eeedf3]">
          Za<u>m</u>knij
        </button>
      </div>
    </div>
  );
}

export default function App() {
  return (
    <div className="relative flex min-h-screen flex-col bg-[#ebeff4] font-['DejaVu_Sans',Verdana,sans-serif]">
      <AppHeader />
      <Ribbon />
      <div className="flex flex-1">
        <Sidebar />
        <Dashboard />
      </div>
      <footer>
        <p className="h-[26px] bg-[#707070] pr-[2px] text-right text-[12px] leading-[27px] text-white">
          Copyright 2022 by RAFSOFT.NET. Wszystkie prawa zastrzeżone.
        </p>
        <div className="flex h-[19px] flex-col justify-between bg-[#2b579a]">
          <p className="h-[18px] pl-[509px] font-['Open_Sans','Noto_Sans',sans-serif] text-[11px] leading-[20px] text-white">2022-11-09</p>
          <div className="ml-[821px] h-px w-[326px] shrink-0 bg-[#dfe6f0]" />
        </div>
      </footer>
      <SyncDialog />
    </div>
  );
}
